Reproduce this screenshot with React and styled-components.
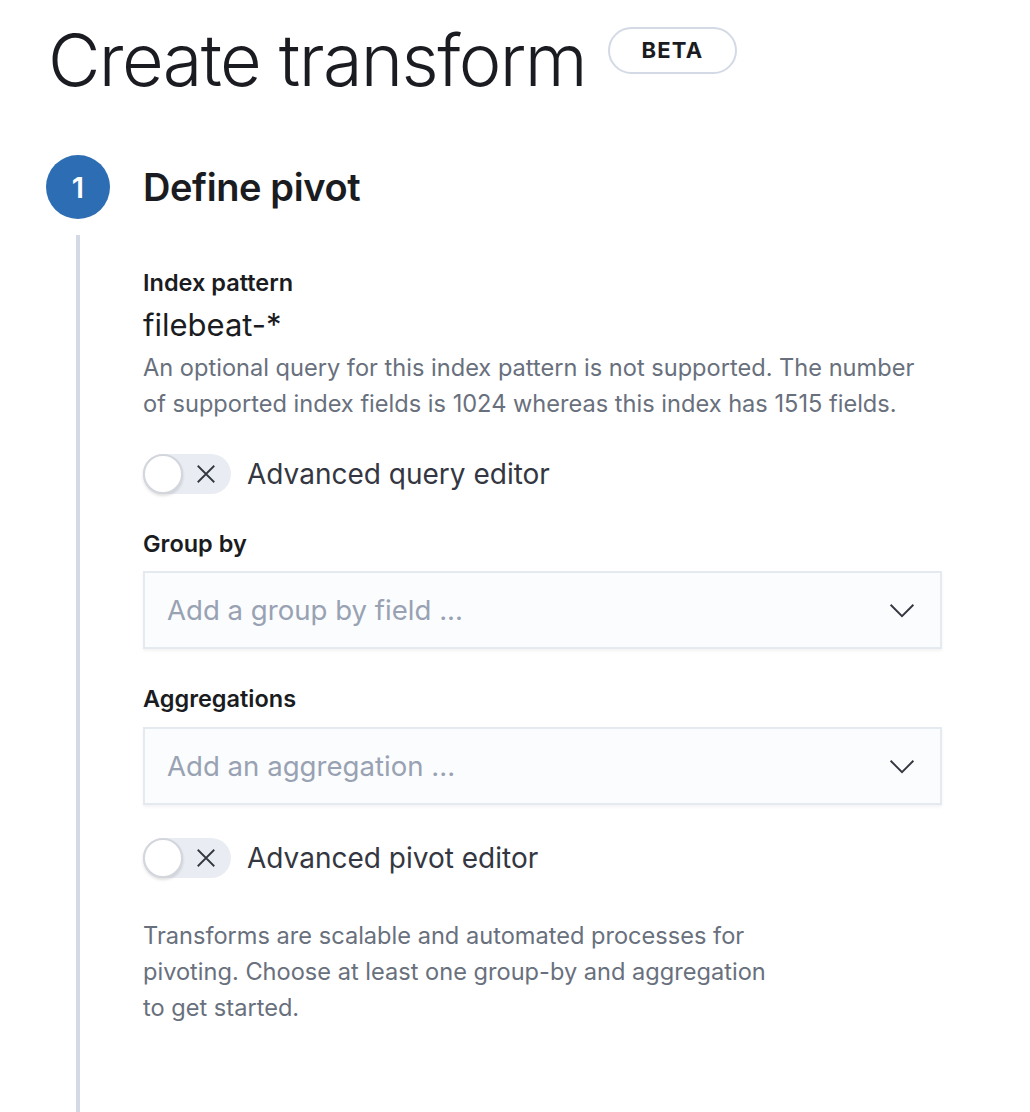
import React from "react";
import styled, { createGlobalStyle } from "styled-components";

const GlobalStyle = createGlobalStyle`
  html, body {
    margin: 0;
    padding: 0;
    background: #ffffff;
  }
  body {
    font-family: Inter, "Noto Sans", "Liberation Sans", sans-serif;
    color: #1a1c21;
    -webkit-font-smoothing: antialiased;
  }
`;

const Page = styled.div`
  width: 1030px;
  height: 1112px;
  overflow: hidden;
  box-sizing: border-box;
  padding: 20px 0 0 48px;
`;

const Header = styled.div`
  display: flex;
  align-items: center;
  gap: 22px;
  height: 80px;
`;

const PageTitle = styled.h1`
  margin: 0;
  font-size: 72px;
  font-weight: 300;
  letter-spacing: -1.6px;
  line-height: 80px;
  color: #1a1c21;
`;

const Badge = styled.span`
  display: inline-flex;
  align-items: center;
  justify-content: center;
  box-sizing: border-box;
  width: 129px;
  height: 47px;
  margin-top: -20px;
  border: 2px solid #d3dae6;
  border-radius: 24px;
  font-size: 22px;
  font-weight: 700;
  letter-spacing: 1.2px;
  color: #1a1c21;
`;

const Steps = styled.div`
  margin-top: 55px;
`;

const StepHead = styled.div`
  display: flex;
  align-items: center;
  gap: 33px;
  margin-left: -2px;
`;

const StepNumber = styled.div`
  width: 64px;
  height: 64px;
  border-radius: 50%;
  background: #2d6db3;
  color: #ffffff;
  display: flex;
  align-items: center;
  justify-content: center;
  font-size: 29px;
  font-weight: 600;
  flex-shrink: 0;
`;

const StepTitle = styled.h2`
  margin: 0;
  font-size: 38px;
  font-weight: 560;
  letter-spacing: -0.4px;
  color: #1a1c21;
`;

const StepBody = styled.div`
  margin-top: 16px;
  margin-left: 28px;
  border-left: 4px solid #d3dae6;
  padding: 33px 0 100px 63px;
  min-height: 900px;
`;

const Field = styled.div`
  display: flex;
  flex-direction: column;
  width: 799px;
  margin-bottom: ${(p) => p.$gap || 0}px;
`;

const Label = styled.div`
  font-size: 23.5px;
  font-weight: 600;
  line-height: 30px;
  color: #1a1c21;
  margin-bottom: ${(p) => p.$gap || 0}px;
`;

const Value = styled.div`
  margin-top: 7px;
  font-size: 31px;
  line-height: 40px;
  color: #1a1c21;
`;

const HelpText = styled.p`
  margin: 5px 0 0;
  font-size: 23.6px;
  line-height: 36px;
  color: #69707d;
`;

const SwitchRow = styled.label`
  display: flex;
  align-items: center;
  gap: 16px;
  margin: ${(p) => p.$margin || "0"};
`;

const Track = styled.span`
  position: relative;
  width: 88px;
  height: 40px;
  border-radius: 20px;
  background: #e9edf3;
  display: flex;
  align-items: center;
  justify-content: flex-end;
  padding-right: 13px;
  box-sizing: border-box;
`;

const Knob = styled.span`
  position: absolute;
  left: 0;
  top: 0;
  width: 40px;
  height: 40px;
  box-sizing: border-box;
  border-radius: 50%;
  background: #ffffff;
  border: 2px solid #d3d6dc;
  box-shadow: 0 2px 3px rgba(0, 0, 0, 0.12);
`;

const SwitchLabel = styled.span`
  font-size: 28px;
  color: #343741;
`;

const Select = styled.div`
  display: flex;
  align-items: center;
  justify-content: space-between;
  box-sizing: border-box;
  height: 78px;
  padding: 0 24px 0 22px;
  background: #fbfcfd;
  border: 2px solid #e5e9f0;
  box-shadow: 0 2px 3px rgba(0, 0, 0, 0.05);
`;

const Placeholder = styled.span`
  font-size: 27.6px;
  color: #98a2b3;
`;

const Description = styled.p`
  margin: 40px 0 0;
  width: 640px;
  font-size: 23.6px;
  line-height: 36px;
  color: #69707d;
`;

const Cross = () => (
  <svg width="24" height="24" viewBox="0 0 16 16" fill="none">
    <path d="M2.5 2.5l11 11M13.5 2.5l-11 11" stroke="#343741" strokeWidth="1.2" />
  </svg>
);

const Chevron = () => (
  <svg width="28" height="28" viewBox="0 0 16 16" fill="none">
    <path d="M1.5 5l6.5 6.5L14.5 5" stroke="#343741" strokeWidth="1.1" />
  </svg>
);

const Switch = ({ label, margin }) => (
  <SwitchRow $margin={margin}>
    <Track>
      <Knob />
      <Cross />
    </Track>
    <SwitchLabel>{label}</SwitchLabel>
  </SwitchRow>
);

const App = () => {
  return (
    <>
      <GlobalStyle />
      <Page>
        <Header>
          <PageTitle>Create transform</PageTitle>
          <Badge>BETA</Badge>
        </Header>
        <Steps>
          <StepHead>
            <StepNumber>1</StepNumber>
            <StepTitle>Define pivot</StepTitle>
          </StepHead>
          <StepBody>
            <Field>
              <Label>Index pattern</Label>
              <Value>filebeat-*</Value>
              <HelpText>
                An optional query for this index pattern is not supported. The
                number of supported index fields is 1024 whereas this index has
                1515 fields.
              </HelpText>
            </Field>
            <Switch label="Advanced query editor" margin="32px 0 35px" />
            <Field $gap={35}>
              <Label $gap={12}>Group by</Label>
              <Select>
                <Placeholder>Add a group by field ...</Placeholder>
                <Chevron />
              </Select>
            </Field>
            <Field>
              <Label $gap={13}>Aggregations</Label>
              <Select>
                <Placeholder>Add an aggregation ...</Placeholder>
                <Chevron />
              </Select>
            </Field>
            <Switch label="Advanced pivot editor" margin="33px 0 0" />
            <Description>
              Transforms are scalable and automated processes for pivoting.
              Choose at least one group-by and aggregation to get started.
            </Description>
          </StepBody>
        </Steps>
      </Page>
    </>
  );
};

export default App;
